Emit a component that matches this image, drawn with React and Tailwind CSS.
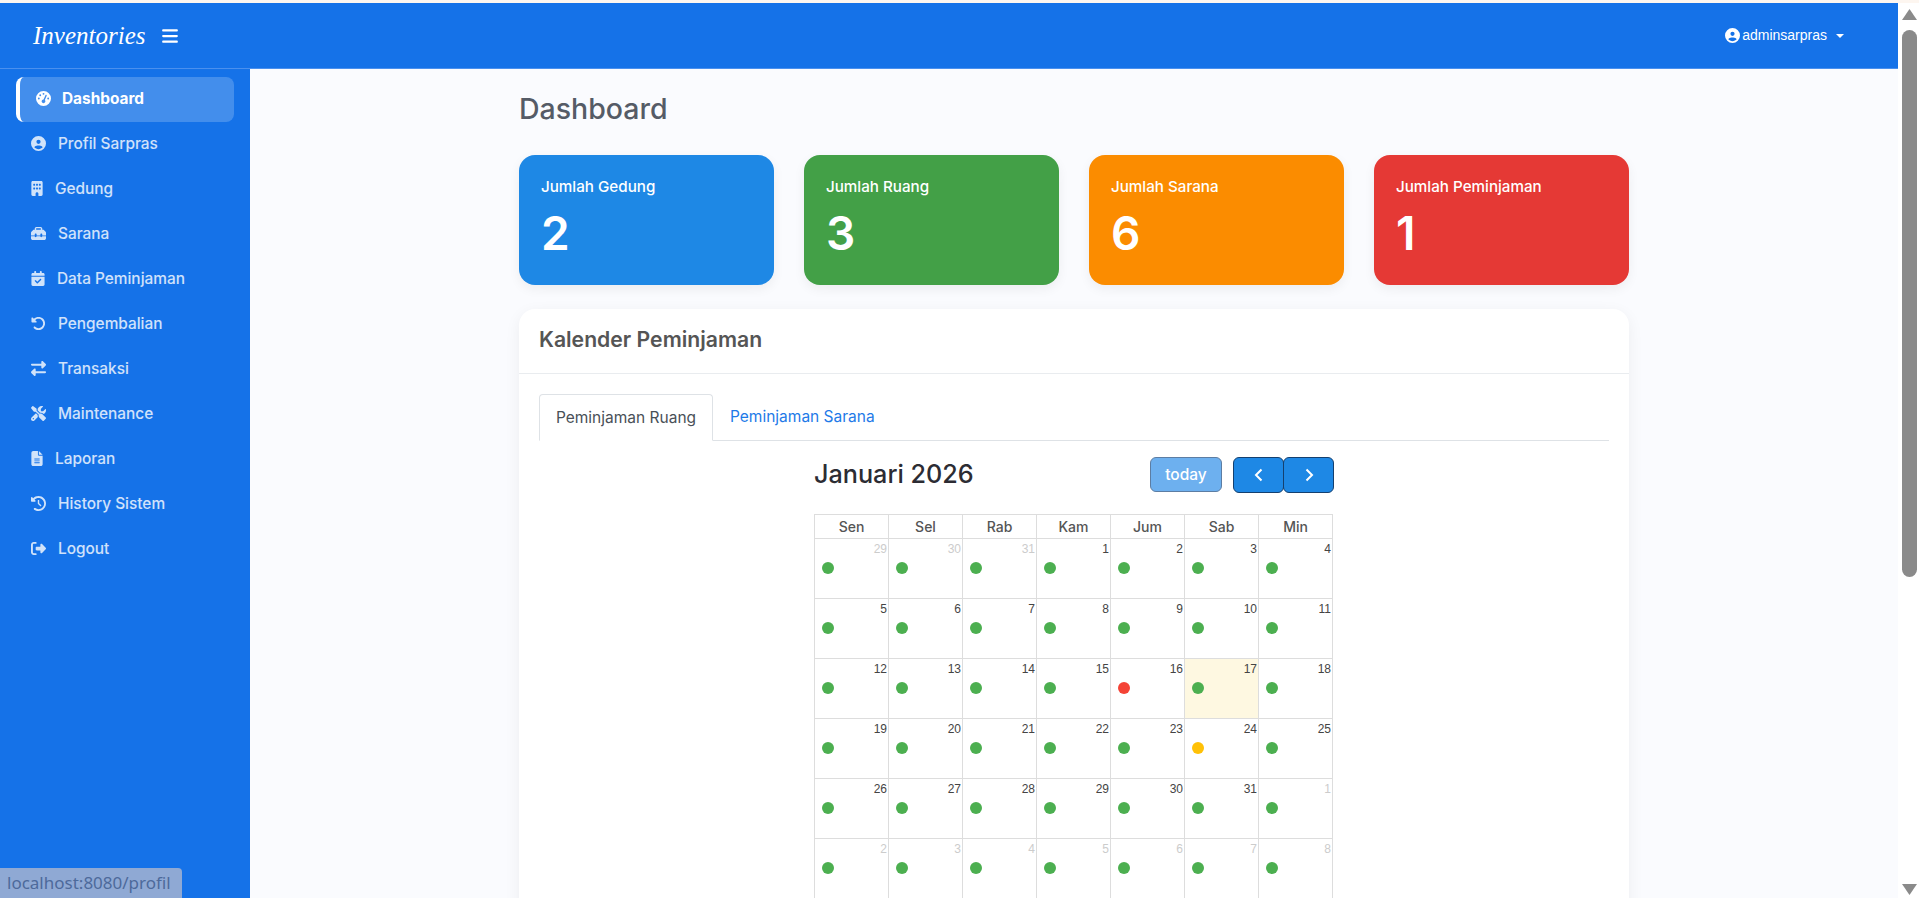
import React from "react";
import { FaGaugeHigh, FaCircleUser, FaBuilding, FaToolbox, FaCalendarCheck, FaRotateLeft, FaRightLeft, FaScrewdriverWrench, FaFileLines, FaClockRotateLeft, FaRightFromBracket, FaBars } from "react-icons/fa6";

const FONT = "[font-family:Inter,'Noto_Sans',sans-serif]";

const menu = [
  { label: "Profil Sarpras", Icon: FaCircleUser, w: "w-[15px]" },
  { label: "Gedung", Icon: FaBuilding, w: "w-[12px]" },
  { label: "Sarana", Icon: FaToolbox, w: "w-[15px]" },
  { label: "Data Peminjaman", Icon: FaCalendarCheck, w: "w-[14px]" },
  { label: "Pengembalian", Icon: FaRotateLeft, w: "w-[15px]" },
  { label: "Transaksi", Icon: FaRightLeft, w: "w-[15px]" },
  { label: "Maintenance", Icon: FaScrewdriverWrench, w: "w-[15px]" },
  { label: "Laporan", Icon: FaFileLines, w: "w-[12px]" },
  { label: "History Sistem", Icon: FaClockRotateLeft, w: "w-[15px]" },
  { label: "Logout", Icon: FaRightFromBracket, w: "w-[15px]" },
];

const stats = [
  { label: "Jumlah Gedung", value: "2", bg: "bg-[#1e88e5]" },
  { label: "Jumlah Ruang", value: "3", bg: "bg-[#43a047]" },
  { label: "Jumlah Sarana", value: "6", bg: "bg-[#fb8c00]" },
  { label: "Jumlah Peminjaman", value: "1", bg: "bg-[#e53935]" },
];

const days = ["Sen", "Sel", "Rab", "Kam", "Jum", "Sab", "Min"];
const weeks = [
  [[29, 1], [30, 1], [31, 1], [1], [2], [3], [4]],
  [[5], [6], [7], [8], [9], [10], [11]],
  [[12], [13], [14], [15], [16, 0, "r"], [17, 0, "g", true], [18]],
  [[19], [20], [21], [22], [23], [24, 0, "y"], [25]],
  [[26], [27], [28], [29], [30], [31], [1, 1]],
  [[2, 1], [3, 1], [4, 1], [5, 1], [6, 1], [7, 1], [8, 1]],
];

function Day({ d }) {
  const [n, other, dot, today] = d;
  const dotCls = dot === "r" ? "bg-[#f44336]" : dot === "y" ? "bg-[#ffc107]" : "bg-[#4caf50]";
  return (
    <div className={`h-[60px] border-r border-b border-[#ddd] px-[7px] pt-[2px] shrink-0 ${today ? "bg-[#fef8e1]" : ""}`}>
      <div className={`text-right -mr-[6px] text-[12px] leading-[16px] [font-family:'Liberation_Sans',sans-serif] ${other ? "text-[#ccc]" : "text-[#444]"}`}>{n}</div>
      <div className={`mt-[5px] w-[12px] h-[12px] rounded-full ${dotCls}`} />
    </div>
  );
}

export default function App() {
  return (
    <div className={`h-[898px] w-full overflow-hidden flex flex-col bg-[#fafbfe] ${FONT}`}>
      <div className="h-[3px] shrink-0 bg-[#fdf6f0]" />
      <div className="flex flex-1 min-h-0">
        <div className="flex-1 min-w-0 flex flex-col">
          <header className="h-[66px] shrink-0 bg-[#1572e8] border-b border-[#4a90ee] flex items-center justify-between">
            <div className="flex items-center pl-[33px]">
              <span className="text-white text-[25px] italic leading-none w-[129px] [font-family:'Liberation_Serif',serif]">Inventories</span>
              <FaBars className="text-white w-[16px] h-[18px]" />
            </div>
            <div className="flex items-center text-white text-[14px] pr-[54px] [font-family:'Liberation_Sans',sans-serif]">
              <FaCircleUser className="w-[15px] h-[15px] mr-[2px]" />
              <span>adminsarpras</span>
              <span className="ml-[9px] w-0 h-0 border-x-[4px] border-x-transparent border-t-[4px] border-t-white" />
            </div>
          </header>
          <div className="flex flex-1 min-h-0">
            <aside className="w-[250px] shrink-0 bg-[#1572e8] pt-[8px] pl-[16px] pr-[16px]">
              <nav className="flex flex-col">
                <a className="h-[45px] pb-[2px] flex items-center gap-[11px] rounded-[8px] bg-white/20 border-l-[4px] border-white pl-[16px] text-white font-bold text-[15.4px]">
                  <FaGaugeHigh className="w-[15px] h-[15px]" />
                  Dashboard
                </a>
                {menu.map(({ label, Icon, w }) => (
                  <a key={label} className="h-[45px] pb-[2px] flex items-center gap-[12px] pl-[15px] text-white/80 font-medium text-[15.4px]">
                    <Icon className={`${w} h-[15px] shrink-0`} />
                    {label}
                  </a>
                ))}
              </nav>
            </aside>
            <main className="flex-1 min-w-0 flex justify-center overflow-hidden pt-[19px]">
              <div className="w-[1110px]">
                <h1 className="text-[28.5px] leading-[42px] font-medium text-[#555b66]">Dashboard</h1>
                <div className="mt-[25px] grid grid-cols-4 gap-[30px]">
                  {stats.map((s) => (
                    <div key={s.label} className={`${s.bg} h-[130px] rounded-[16px] px-[22px] pt-[22px] text-white shadow-[0_4px_12px_rgba(0,0,0,0.06)]`}>
                      <div className="text-[15.2px] leading-[20px] font-medium">{s.label}</div>
                      <div className="mt-[8px] text-[46px] leading-[56px] font-semibold">{s.value}</div>
                    </div>
                  ))}
                </div>
                <section className="mt-[24px] bg-white rounded-t-[16px] shadow-[0_4px_16px_rgba(0,0,0,0.06)] h-[700px]">
                  <div className="h-[65px] pb-[2px] border-b border-[#e9ecef] flex items-center px-[20px]">
                    <h2 className="text-[21.2px] font-semibold text-[#555]">Kalender Peminjaman</h2>
                  </div>
                  <div className="px-[20px] pt-[20px]">
                    <div className="flex h-[47px] border-b border-[#dee2e6]">
                      <div className="h-[47px] w-[174px] flex items-center justify-center rounded-t-[4px] border border-[#dee2e6] border-b-white bg-white text-[#495057] text-[15.5px]">Peminjaman Ruang</div>
                      <div className="h-[46px] pl-[17px] flex items-center text-[#1e7ae8] text-[15.5px]">Peminjaman Sarana</div>
                    </div>
                    <div className="w-[520px] ml-[275px]">
                      <div className="flex items-start h-[73px] pt-[16px]">
                        <h3 className="text-[25.2px] leading-[34px] font-medium text-[#2c2c33] flex-1">Januari 2026</h3>
                        <button className="w-[72px] h-[35px] rounded-[6px] border border-[#5c7da3] bg-[#6db0ef] text-white text-[15.5px] font-medium">today</button>
                        <div className="flex ml-[11px]">
                          <button className="w-[51px] h-[36px] rounded-[6px] border border-[#14406f] bg-[#1e88e5] text-white flex items-center justify-center">
                            <svg width="12" height="14" viewBox="0 0 12 14" fill="none" stroke="currentColor" strokeWidth="2"><path d="M8.5 1.5 3 7l5.5 5.5" /></svg>
                          </button>
                          <button className="w-[51px] -ml-[1px] h-[36px] rounded-[6px] border border-[#14406f] bg-[#1e88e5] text-white flex items-center justify-center">
                            <svg width="12" height="14" viewBox="0 0 12 14" fill="none" stroke="currentColor" strokeWidth="2"><path d="M3.5 1.5 9 7l-5.5 5.5" /></svg>
                          </button>
                        </div>
                      </div>
                      <div className="w-[519px] grid grid-cols-7 border-l border-t border-[#ddd]">
                        {days.map((d) => (
                          <div key={d} className="h-[24px] border-r border-b border-[#ddd] flex items-center justify-center text-[14px] font-medium text-[#555]">{d}</div>
                        ))}
                        {weeks.flat().map((d, i) => (
                          <Day key={i} d={d} />
                        ))}
                      </div>
                    </div>
                  </div>
                </section>
              </div>
            </main>
          </div>
        </div>
        <div className="w-[21px] shrink-0 flex flex-col items-start pl-[4px] bg-white pb-[3px]">
          <svg width="15" height="11" viewBox="0 0 15 11" className="mt-[6px] shrink-0"><path d="M7.5 0 15 11H0z" fill="#8a8a8a" /></svg>
          <div className="mt-[10px] w-[15px] h-[547px] shrink-0 rounded-full bg-[#8a8a8a]" />
          <div className="flex-1" />
          <svg width="15" height="11" viewBox="0 0 15 11" className="shrink-0"><path d="M0 0h15L7.5 11z" fill="#8a8a8a" /></svg>
        </div>
      </div>
      <div className="absolute left-0 bottom-0 h-[30px] w-[182px] bg-[#8fa9d4] rounded-tr-[4px] pl-[7px] flex items-center text-[#4d6a9b] text-[17px] [font-family:'Noto_Sans',sans-serif]">localhost:8080/profil</div>
    </div>
  );
}
